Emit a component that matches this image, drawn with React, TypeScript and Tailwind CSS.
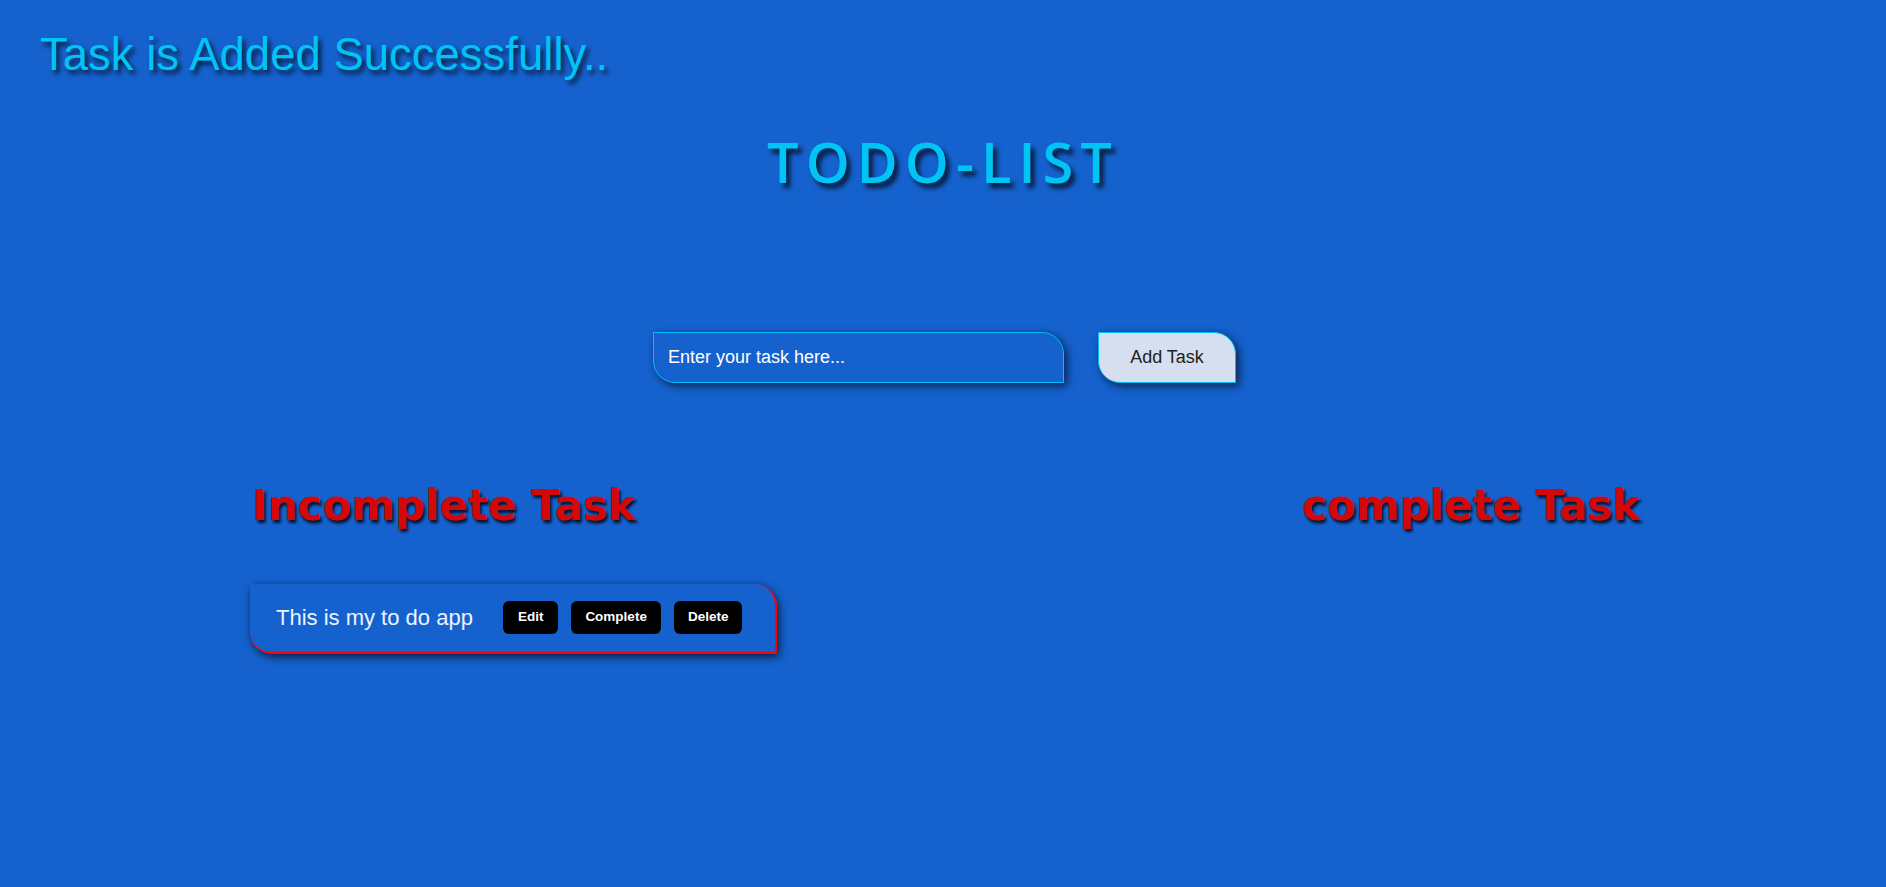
import { useState } from 'react'

type Task = { id: number; text: string; done: boolean }

export default function App() {
  const [value, setValue] = useState('')
  const [tasks, setTasks] = useState<Task[]>([{ id: 1, text: 'This is my to do app', done: false }])

  function addTask() {
    if (!value.trim()) return
    setTasks((t) => [...t, { id: Date.now(), text: value, done: false }])
    setValue('')
  }

  const incomplete = tasks.filter((t) => !t.done)
  const complete = tasks.filter((t) => t.done)

  return (
    <div className="min-h-screen bg-[#1562cf] font-['Liberation_Sans',Arial,sans-serif]">
      <div className="pl-[40px] pt-[32px] text-[45.5px] leading-none text-[#00c4f5] [text-shadow:3px_4px_5px_rgba(0,0,0,0.75)]">
        Task is Added Successfully..
      </div>

      <h1 className="mt-[55px] text-center font-['Open_Sans',sans-serif] text-[56px] font-semibold leading-none tracking-[7px] text-[#00c4f5] [text-shadow:4px_5px_5px_rgba(0,0,0,0.75)]">
        TODO-LIST
      </h1>

      <div className="mt-[143px] flex justify-center gap-[34px] pl-[3px]">
        <input
          value={value}
          onChange={(e) => setValue(e.target.value)}
          placeholder="Enter your task here..."
          className="h-[51px] w-[411px] rounded-tr-[22px] rounded-bl-[22px] border border-[#00bfff] bg-[#1562cf] px-[14px] text-[18px] text-white outline-none shadow-[3px_3px_10px_rgba(0,0,0,0.65)] placeholder:text-white"
        />
        <button
          onClick={addTask}
          className="h-[51px] w-[138px] rounded-tr-[22px] rounded-bl-[22px] border border-[#00bfff] bg-[#d5dfef] text-[18px] text-[#222] shadow-[3px_3px_10px_rgba(0,0,0,0.65)]"
        >
          Add Task
        </button>
      </div>

      <div className="mt-[102px] flex">
        <div className="w-[1302px] pl-[252px]">
          <h2 className="font-['DejaVu_Sans',Verdana,sans-serif] text-[42px] font-bold leading-none text-[#d40808] [text-shadow:2px_3px_3px_rgba(0,0,0,0.8)]">
            Incomplete Task
          </h2>
          <div className="mt-[57px] -ml-[2px] flex flex-col gap-4">
            {incomplete.map((t) => (
              <div
                key={t.id}
                className="flex h-[70px] w-[527px] items-center rounded-tr-[22px] rounded-bl-[22px] border-r-2 border-b-2 border-[#ff0000] pl-[26px] shadow-[2px_3px_10px_rgba(0,0,0,0.7)]"
              >
                <span className="mr-[30px] text-[22px] text-[#eef2ff]">{t.text}</span>
                <div className="flex gap-[13px]">
                  <button className="h-[33px] rounded-[6px] bg-black px-[15px] text-[13.5px] font-bold text-white">Edit</button>
                  <button
                    onClick={() => setTasks((all) => all.map((x) => (x.id === t.id ? { ...x, done: true } : x)))}
                    className="h-[33px] rounded-[6px] bg-black px-[14px] text-[13.5px] font-bold text-white"
                  >
                    Complete
                  </button>
                  <button
                    onClick={() => setTasks((all) => all.filter((x) => x.id !== t.id))}
                    className="h-[33px] rounded-[6px] bg-black px-[14px] text-[13.5px] font-bold text-white"
                  >
                    Delete
                  </button>
                </div>
              </div>
            ))}
          </div>
        </div>
        <div>
          <h2 className="font-['DejaVu_Sans',Verdana,sans-serif] text-[42px] font-bold leading-none text-[#d40808] [text-shadow:2px_3px_3px_rgba(0,0,0,0.8)]">
            complete Task
          </h2>
          <div className="mt-[57px] flex flex-col gap-4">
            {complete.map((t) => (
              <div key={t.id} className="text-[22px] text-white">
                {t.text}
              </div>
            ))}
          </div>
        </div>
      </div>
    </div>
  )
}
